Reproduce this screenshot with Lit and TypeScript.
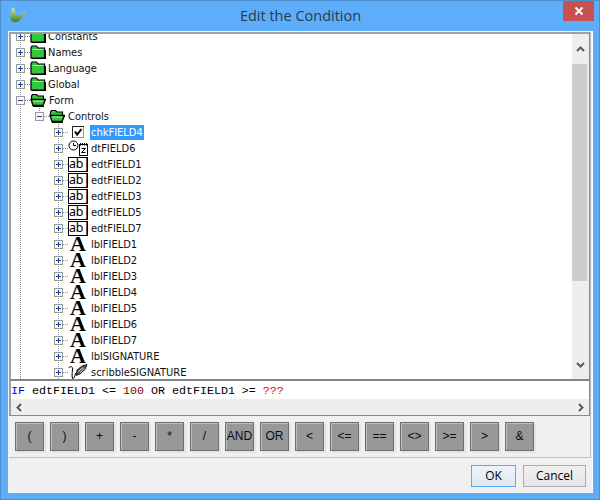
import { LitElement, html, css, svg } from "lit";
import { customElement } from "lit/decorators.js";

type Row = { level: number; name: string; icon: string; open?: boolean; sel?: boolean };

const rows: Row[] = [
  { level: 0, name: "Constants", icon: "folder" },
  { level: 0, name: "Names", icon: "folder" },
  { level: 0, name: "Language", icon: "folder" },
  { level: 0, name: "Global", icon: "folder" },
  { level: 0, name: "Form", icon: "open", open: true },
  { level: 1, name: "Controls", icon: "open", open: true },
  { level: 2, name: "chkFIELD4", icon: "chk", sel: true },
  { level: 2, name: "dtFIELD6", icon: "dt" },
  { level: 2, name: "edtFIELD1", icon: "edt" },
  { level: 2, name: "edtFIELD2", icon: "edt" },
  { level: 2, name: "edtFIELD3", icon: "edt" },
  { level: 2, name: "edtFIELD5", icon: "edt" },
  { level: 2, name: "edtFIELD7", icon: "edt" },
  { level: 2, name: "lblFIELD1", icon: "lbl" },
  { level: 2, name: "lblFIELD2", icon: "lbl" },
  { level: 2, name: "lblFIELD3", icon: "lbl" },
  { level: 2, name: "lblFIELD4", icon: "lbl" },
  { level: 2, name: "lblFIELD5", icon: "lbl" },
  { level: 2, name: "lblFIELD6", icon: "lbl" },
  { level: 2, name: "lblFIELD7", icon: "lbl" },
  { level: 2, name: "lblSIGNATURE", icon: "lbl" },
  { level: 2, name: "scribbleSIGNATURE", icon: "scribble" },
];

const ops = ["(", ")", "+", "-", "*", "/", "AND", "OR", "<", "<=", "==", "<>", ">=", ">", "&"];

const folderIcon = html`<svg width="16" height="14" viewBox="0 0 16 14">
  <path d="M1 13V3L2 1H6.500L8 3H14.500V13Z" fill="#35c43d" stroke="#000" stroke-width="1.200"/>
  <path d="M1.500 13.500H15.500V5" fill="none" stroke="#000" stroke-width="1.200"/>
  <path d="M2.500 4.500H13.500" stroke="#a8eca8" stroke-width="1"/>
</svg>`;

const openIcon = html`<svg width="16" height="14" viewBox="0 0 16 14">
  <path d="M1.500 8V3L2.500 1.500H6.500L8 3H13.500V6" fill="#35c43d" stroke="#000" stroke-width="1.200"/>
  <path d="M1 6.500H15.500L13 12.500H3Z" fill="#35c43d" stroke="#000" stroke-width="1.300"/>
  <path d="M3 13.500H14" stroke="#000" stroke-width="1.200"/>
  <path d="M3 8H13" stroke="#b5f0b5" stroke-width="1"/>
</svg>`;

const chkIcon = html`<svg width="20" height="14" viewBox="0 0 20 14">
  <rect x="4.500" y="1.500" width="11" height="11" fill="#fff" stroke="#999"/>
  <path d="M4.500 13V1.500H16" stroke="#222" fill="none"/>
  <path d="M7 6.500L9.200 9.500L13.500 4" fill="none" stroke="#000" stroke-width="2"/>
</svg>`;

const dtIcon = html`<svg width="21" height="16" viewBox="0 0 21 16">
  <circle cx="5.500" cy="5.500" r="4.500" fill="#fff" stroke="#000"/>
  <path d="M5.500 3V5.500H8" fill="none" stroke="#000"/>
  <rect x="11.500" y="4.500" width="8" height="11" fill="#fff" stroke="#000"/>
  <path d="M12.500 3V5.500M14.500 3V5.500M16.500 3V5.500M18.500 3V5.500" stroke="#000"/>
  <path d="M13.500 8.500H17.500L13.500 12.500H17.500" fill="none" stroke="#000"/>
</svg>`;

const scribbleIcon = html`<svg width="20" height="16" viewBox="0 0 20 16">
  <path d="M0.500 4C2 2 4.500 2 4.500 5C4.500 8 3.500 11 4.500 14.500C6 15 7 12 7.500 9" fill="none" stroke="#000"/>
  <path d="M8 11.500L9 6L14 2L19 0.500L17 5.500L12 10Z" fill="#555" stroke="#000" stroke-width=".8"/>
  <path d="M10 8L15 3.500M12 9L16.500 4" stroke="#eee" stroke-width=".8"/>
</svg>`;

@customElement("app-root")
export class AppRoot extends LitElement {
  static styles = css`
    :host { display: block; width: 600px; height: 500px; font-family: "DejaVu Sans", sans-serif; overflow: hidden; }
    .win { box-sizing: border-box; width: 600px; height: 500px; background: #5eadfb; border: 1px solid #4f8fce; display: flex; flex-direction: column; padding: 0 6px 6px 7px; }
    .titlebar { height: 30px; flex: none; display: grid; grid-template-columns: 30px 1fr 30px; align-items: center; position: relative; }
    .logo { display: block; margin: 2px 0 0 -1px; }
    .title { text-align: center; font: 14.500px "Open Sans", sans-serif; color: #2c3a48; margin-top: -1px; }
    .close { position: absolute; right: -1px; top: 0; width: 31px; height: 20px; background: #c75050; display: flex; align-items: center; justify-content: center; }
    .client { flex: 1; background: #f0f0f0; border: 1px solid #f4f4f4; border-right-color: #fff; display: flex; flex-direction: column; min-height: 0; }
    .panel { height: 426px; box-sizing: border-box; flex: none; background: #f0f0f0; border-bottom: 1px solid #bfbfbf; border-right: 1px solid #bfbfbf; display: flex; flex-direction: column; margin-right: 1px; }
    .box { border: 2px solid #a0a0a0; border-right: 1px solid #888; border-bottom: 0; background: #fff; height: 347px; box-sizing: border-box; display: flex; flex: none; }
    .tree { flex: 1; overflow: hidden; position: relative; font-family: "DejaVu Sans", sans-serif; font-stretch: condensed; font-size: 11px; color: #000; min-width: 0; }
    .rows { margin-top: -6px; display: flex; flex-direction: column; }
    .row { height: 16px; display: flex; align-items: center; white-space: nowrap; }
    .indent { flex: none; height: 16px; position: relative; }
    .guide { position: absolute; top: 0; width: 1px; height: 16px; background: repeating-linear-gradient(to bottom, #8a8a8a 0 1px, transparent 1px 2px); }
    .half { height: 8px; }
    .exp { flex: none; box-sizing: border-box; width: 9px; height: 9px; border: 1px solid #9a9a9a; background: #f6f6f6; position: relative; }
    .exp::before { content: ""; position: absolute; left: 1px; top: 3px; width: 5px; height: 1px; background: #1f3f8f; }
    .exp.plus::after { content: ""; position: absolute; left: 3px; top: 1px; width: 1px; height: 5px; background: #1f3f8f; }
    .dash { flex: none; width: 5px; height: 1px; background: repeating-linear-gradient(to right, #8a8a8a 0 1px, transparent 1px 2px); }
    .ic { flex: none; display: flex; align-items: center; justify-content: flex-start; height: 16px; }
    .ic.l01 { width: 16px; }
    .ic.l2 { width: 23px; }
    .ab { box-sizing: border-box; width: 20px; height: 15px; border: 1px solid #000; background: #fff; font: 12.500px/12px "Noto Sans", sans-serif; letter-spacing: -.2px; text-align: center; color: #000; }
    .big { font: bold 22px/16px "Liberation Serif", serif; color: #000; margin-left: 2px; }
    .name { margin-left: 1px; padding: 0 1px; height: 15px; line-height: 15px; color: #111; }
    .row.open .name { margin-left: 2px; }
    .row.l2 .name { margin-left: -1px; }
    .name.sel { background: #3399ff; color: #fff; }
    .vbar { width: 17px; flex: none; background: #eeeeee; display: flex; flex-direction: column; }
    .sb-btn { height: 30px; flex: none; display: flex; align-items: center; justify-content: center; }
    .thumb { height: 217px; flex: none; background: #cdcdcd; margin-right: 2px; }
    .spacer { flex: 1; }
    .code { border-top: 2px solid #82868f; height: 20px; flex: none; box-sizing: border-box; background: #fff; font: 11.670px/20px "Liberation Mono", monospace; white-space: pre; padding-left: 0; color: #000; border-right: 1px solid #888; border-left: 2px solid #a0a0a0; }
    .kw { color: #0000e0; }
    .num { color: #800000; }
    .err { color: #e00000; }
    .hbar { height: 17px; flex: none; background: #eeeeee; display: flex; align-items: center; justify-content: space-between; padding: 0 4px; border-left: 2px solid #a0a0a0; border-right: 1px solid #888; border-bottom: 1px solid #888; box-sizing: border-box; }
    .ops { display: flex; gap: 6px; padding: 6px 0 0 6px; }
    .op { box-sizing: border-box; width: 29px; height: 29px; background: #989898; border: 1px solid #6e6e6e; box-shadow: inset 1px 1px 0 #bdbdbd, 2px 2px 0 #e4e4e4; font: 12px/26px "Liberation Sans", sans-serif; text-align: center; color: #0a0a1e; }
    .foot { flex: 1; display: flex; justify-content: flex-end; gap: 7px; padding: 7px 6px 0 0; }
    .btn { box-sizing: border-box; height: 22px; font: 12px/20px "Open Sans", sans-serif; text-align: center; color: #000; border: 1px solid #acacac; background: linear-gradient(#f0f0f0, #e5e5e5); }
    .ok { width: 45px; border: 1px solid #5ea7ee; background: linear-gradient(#ecf4fb, #dde8f2); }
    .cancel { width: 63px; }
  `;

  private icon(r: Row) {
    switch (r.icon) {
      case "folder": return folderIcon;
      case "open": return openIcon;
      case "chk": return chkIcon;
      case "dt": return dtIcon;
      case "edt": return html`<div class="ab">ab|</div>`;
      case "lbl": return html`<span class="big">A</span>`;
      default: return scribbleIcon;
    }
  }

  private row(r: Row) {
    const indent = [5, 24, 43][r.level];
    return html`<div class="row l${r.level} ${r.open ? "open" : ""}">
      <div class="indent" style="width:${indent}px">
        <div class="guide" style="left:9px"></div>
        ${r.level === 1 ? html`<div class="guide half" style="left:28px"></div>` : ""}
        ${r.level === 2 ? html`<div class="guide" style="left:47px"></div>` : ""}
      </div>
      <div class="exp ${r.open ? "" : "plus"}"></div>
      <div class="dash"></div>
      <div class="ic ${r.level === 2 ? "l2" : "l01"}">${this.icon(r)}</div>
      <div class="name ${r.sel ? "sel" : ""}">${r.name}</div>
    </div>`;
  }

  private chevron(d: string) {
    return html`<svg width="9" height="9" viewBox="0 0 9 9">${svg`<path d="${d}" fill="none" stroke="#5a5a5a" stroke-width="2"/>`}</svg>`;
  }

  render() {
    return html`<div class="win">
      <div class="titlebar">
        <svg class="logo" width="22" height="22" viewBox="0 0 22 22">
          <defs><linearGradient id="g" x1="0" y1="0" x2="0" y2="1"><stop offset="0" stop-color="#d6eab0"/><stop offset="1" stop-color="#3d7d22"/></linearGradient></defs>
          <path d="M6 1C8 2 8.500 6 9 9C10 10 11 10 12.500 9C14 8 16 6 18.500 5C18 8 15 12 12 15C9 17 5 17 3.500 13C3 9 4 4 6 1Z" fill="url(#g)"/>
        </svg>
        <div class="title">Edit the Condition</div>
        <div></div>
        <div class="close">
          <svg width="10" height="10" viewBox="0 0 10 10"><path d="M1.500 1.500L8.500 8.500M8.500 1.500L1.500 8.500" stroke="#fff" stroke-width="2"/></svg>
        </div>
      </div>
      <div class="client">
        <div class="panel">
          <div class="box">
            <div class="tree"><div class="rows">${rows.map((r) => this.row(r))}</div></div>
            <div class="vbar">
              <div class="sb-btn">${this.chevron("M1 6L4.500 2.500L8 6")}</div>
              <div class="thumb"></div>
              <div class="spacer"></div>
              <div class="sb-btn">${this.chevron("M1 3L4.500 6.500L8 3")}</div>
            </div>
          </div>
          <div class="code"><span class="kw">IF</span> edtFIELD1 &lt;= <span class="num">100</span> OR edtFIELD1 &gt;= <span class="err">???</span></div>
          <div class="hbar">${this.chevron("M6 1L2.500 4.500L6 8")}${this.chevron("M3 1L6.500 4.500L3 8")}</div>
          <div class="ops">${ops.map((o) => html`<div class="op">${o}</div>`)}</div>
        </div>
        <div class="foot">
          <div class="btn ok">OK</div>
          <div class="btn cancel">Cancel</div>
        </div>
      </div>
    </div>`;
  }
}
